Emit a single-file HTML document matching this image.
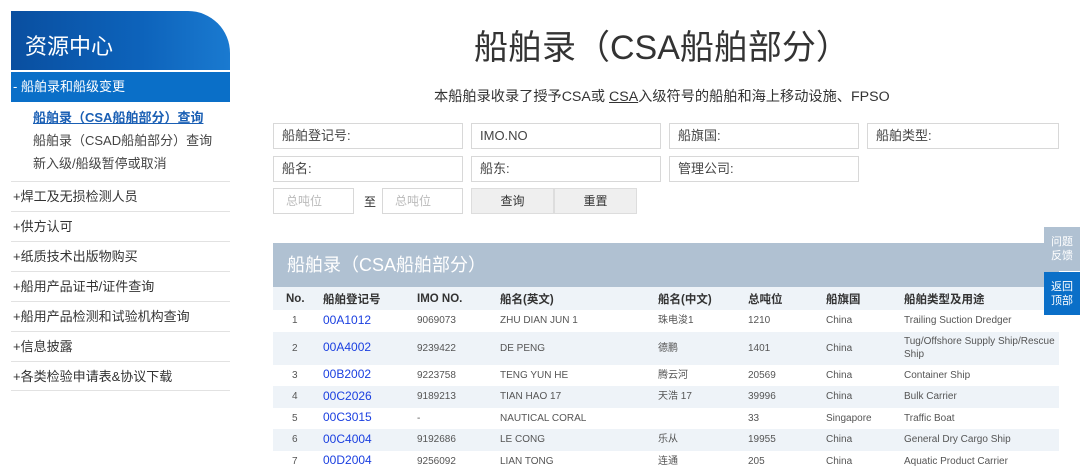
<!DOCTYPE html>
<html><head><meta charset="utf-8"><style>
*{margin:0;padding:0;box-sizing:border-box}
body{width:1080px;height:463px;overflow:hidden;background:#fff;font-family:"Liberation Sans","Noto Sans CJK SC",sans-serif;color:#333;position:relative}
.abs{position:absolute}
.side{left:11px;top:11px;width:219px}
.hd{height:59px;background:linear-gradient(90deg,#0a4fa0,#0d63bb 60%,#1a7ad0);border-top-right-radius:42px;color:#fff;font-size:22px;padding:18px 0 0 14px;overflow:hidden;position:relative}
.act{margin-top:2px;height:30px;background:#0a6fc8;color:#fff;font-size:13px;line-height:30px;padding-left:2px}
.sub{font-size:13px;line-height:23px;padding-left:22px;color:#444}
.sub a{color:#1a5fb4;font-weight:bold;text-decoration:underline}
.it{height:30px;line-height:30px;border-top:1px solid #e2e2e2;font-size:13px;color:#333;padding-left:2px}
h1{position:absolute;left:474px;top:20px;font-size:34px;font-weight:normal;color:#333;white-space:nowrap}
.intro{left:434px;top:86px;font-size:14.2px;color:#333;white-space:nowrap}
.in{position:absolute;height:26px;border:1px solid #d8d8d8;font-size:13px;line-height:24px;padding-left:8px;color:#444}
.ph{color:#bbb;font-size:12px;padding-left:12px}
.btn{position:absolute;top:188px;height:26px;background:#efefef;border:1px solid #ddd;font-size:12px;text-align:center;line-height:24px}
.tb{left:273px;top:243px;width:786px}
.tt{height:44px;background:#b0c1d2;color:#fff;font-size:18px;line-height:44px;padding-left:14px}
table{border-collapse:collapse;width:786px;font-size:10px;color:#555}
th{font-size:11.5px;font-weight:bold;text-align:left;height:23px;background:#eef3f8;color:#333;vertical-align:middle}
td{height:21.5px;vertical-align:middle;line-height:13px}
tr.z td{background:#eef3f8}
td a{color:#1a3fe0;font-size:12px}
.fb{right:0;width:36px;height:44px;color:#fff;font-size:11px;text-align:center;line-height:14px;padding-top:8px}
</style></head><body>
<div class="abs side">
<div class="hd">资源中心</div>
<div class="act">- 船舶录和船级变更</div>
<div style="padding:4px 0 6px">
<div class="sub"><a>船舶录（CSA船舶部分）查询</a></div>
<div class="sub">船舶录（CSAD船舶部分）查询</div>
<div class="sub">新入级/船级暂停或取消</div>
</div>
<div class="it">+焊工及无损检测人员</div>
<div class="it">+供方认可</div>
<div class="it">+纸质技术出版物购买</div>
<div class="it">+船用产品证书/证件查询</div>
<div class="it">+船用产品检测和试验机构查询</div>
<div class="it">+信息披露</div>
<div class="it" style="border-bottom:1px solid #e2e2e2">+各类检验申请表&amp;协议下载</div>
</div>
<h1>船舶录（CSA船舶部分）</h1>
<div class="abs intro">本船舶录收录了授予CSA或 <u>CSA</u>入级符号的船舶和海上移动设施、FPSO</div>
<div class="in" style="left:273px;top:123px;width:190px">船舶登记号:</div>
<div class="in" style="left:471px;top:123px;width:190px">IMO.NO</div>
<div class="in" style="left:669px;top:123px;width:190px">船旗国:</div>
<div class="in" style="left:867px;top:123px;width:192px">船舶类型:</div>
<div class="in" style="left:273px;top:156px;width:190px">船名:</div>
<div class="in" style="left:471px;top:156px;width:190px">船东:</div>
<div class="in" style="left:669px;top:156px;width:190px">管理公司:</div>
<div class="in ph" style="left:273px;top:188px;width:81px">总吨位</div>
<div class="abs" style="left:364px;top:193px;font-size:12px">至</div>
<div class="in ph" style="left:382px;top:188px;width:81px">总吨位</div>
<div class="btn" style="left:471px;width:83px">查询</div>
<div class="btn" style="left:554px;width:83px">重置</div>
<div class="abs tb">
<div class="tt">船舶录（CSA船舶部分）</div>
<table>
<tr><th style="width:50px;padding-left:13px">No.</th><th style="width:94px">船舶登记号</th><th style="width:83px">IMO NO.</th><th style="width:158px">船名(英文)</th><th style="width:90px">船名(中文)</th><th style="width:78px">总吨位</th><th style="width:78px">船旗国</th><th>船舶类型及用途</th></tr>
<tr><td style="padding-left:19px">1</td><td><a>00A1012</a></td><td>9069073</td><td>ZHU DIAN JUN 1</td><td>珠电浚1</td><td>1210</td><td>China</td><td>Trailing Suction Dredger</td></tr>
<tr class="z"><td style="padding-left:19px;height:33px">2</td><td><a>00A4002</a></td><td>9239422</td><td>DE PENG</td><td>德鹏</td><td>1401</td><td>China</td><td>Tug/Offshore Supply Ship/Rescue<br>Ship</td></tr>
<tr><td style="padding-left:19px">3</td><td><a>00B2002</a></td><td>9223758</td><td>TENG YUN HE</td><td>腾云河</td><td>20569</td><td>China</td><td>Container Ship</td></tr>
<tr class="z"><td style="padding-left:19px">4</td><td><a>00C2026</a></td><td>9189213</td><td>TIAN HAO 17</td><td>天浩 17</td><td>39996</td><td>China</td><td>Bulk Carrier</td></tr>
<tr><td style="padding-left:19px">5</td><td><a>00C3015</a></td><td>-</td><td>NAUTICAL CORAL</td><td></td><td>33</td><td>Singapore</td><td>Traffic Boat</td></tr>
<tr class="z"><td style="padding-left:19px">6</td><td><a>00C4004</a></td><td>9192686</td><td>LE CONG</td><td>乐从</td><td>19955</td><td>China</td><td>General Dry Cargo Ship</td></tr>
<tr><td style="padding-left:19px">7</td><td><a>00D2004</a></td><td>9256092</td><td>LIAN TONG</td><td>连通</td><td>205</td><td>China</td><td>Aquatic Product Carrier</td></tr>
</table>
</div>
<div class="abs fb" style="top:227px;background:#b0c1d2">问题<br>反馈</div>
<div class="abs fb" style="top:272px;background:#0a6fc8;height:43px">返回<br>顶部</div>
</body></html>
